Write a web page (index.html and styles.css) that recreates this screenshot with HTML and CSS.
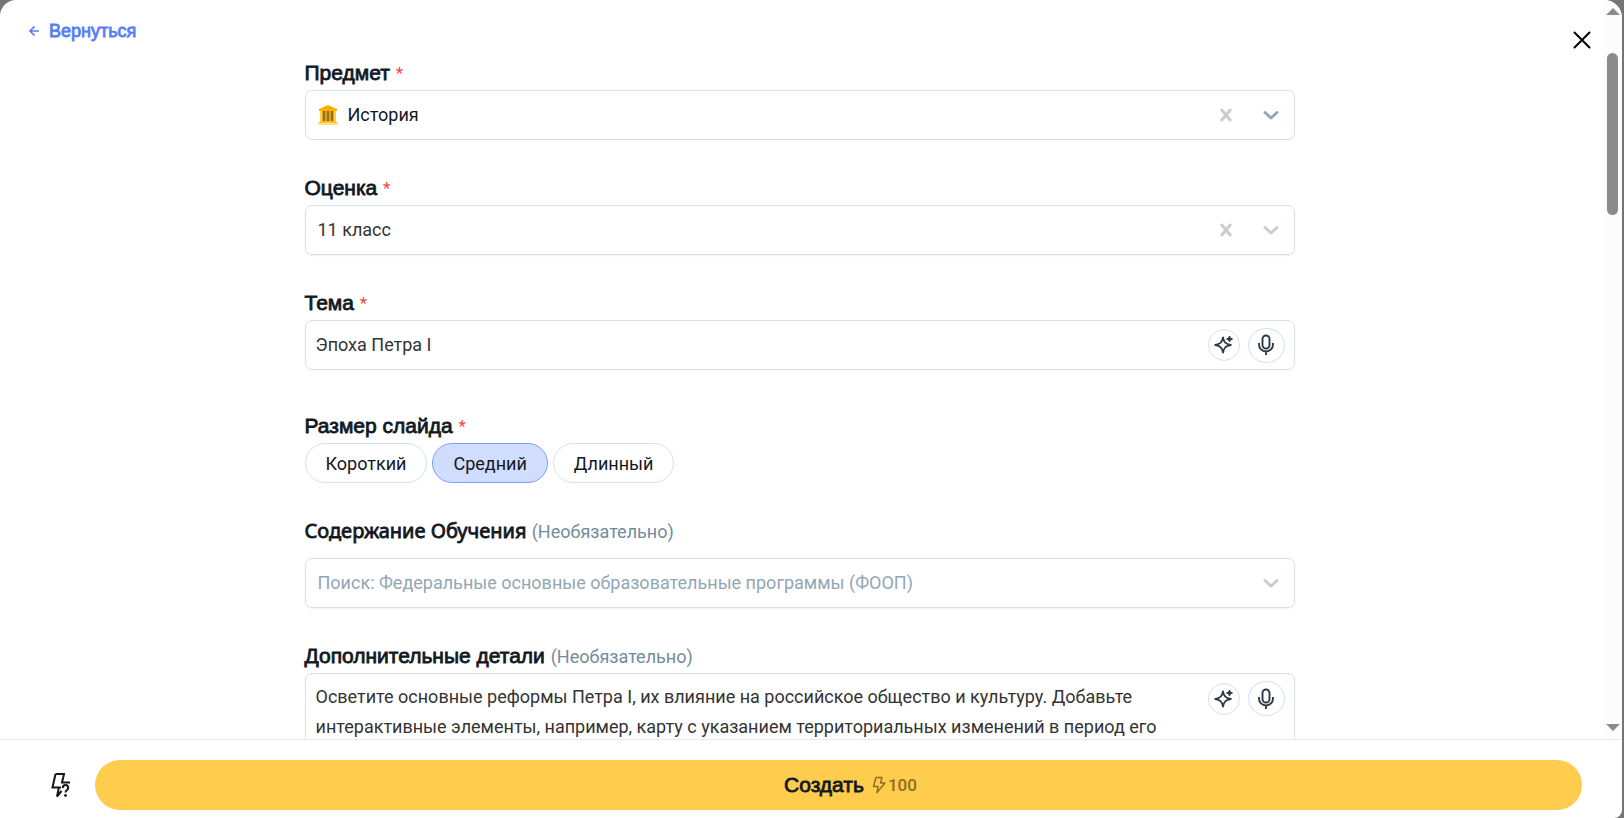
FILE: index.html
```
<!DOCTYPE html>
<html lang="ru">
<head>
  <meta charset="utf-8">
  <title>Создать презентацию</title>
  <link rel="stylesheet" href="styles.css">
</head>
<body>
  <svg class="sprite" aria-hidden="true">
    <symbol id="clear" viewBox="0 0 12 14">
      <path d="M1.800 2l8.400 10M10.200 2l-8.400 10" fill="none" stroke="currentColor" stroke-width="3" stroke-linecap="round"/>
    </symbol>
    <symbol id="chevron" viewBox="0 0 16 10">
      <path d="M2 2.500l6 5.500 6-5.500" fill="none" stroke="currentColor" stroke-width="3" stroke-linecap="round" stroke-linejoin="round"/>
    </symbol>
    <symbol id="sparkle" viewBox="0 0 20 20">
      <path d="M9 2.500c.9 4.800 2.600 6.600 7.800 7.500-5.200.9-6.900 2.700-7.800 7.500-.9-4.800-2.600-6.600-7.800-7.500 5.200-.9 6.900-2.700 7.800-7.500z" fill="none" stroke="currentColor" stroke-width="1.800" stroke-linejoin="round"/>
      <path d="M15.500 1l.9 2.100 2.100.9-2.100.9-.9 2.100-.9-2.100-2.100-.9 2.100-.9z" fill="currentColor" stroke="currentColor" stroke-width="1" stroke-linejoin="round"/>
    </symbol>
    <symbol id="mic" viewBox="0 0 16 22">
      <rect x="4.500" y="1.500" width="7" height="13" rx="3.500" fill="none" stroke="currentColor" stroke-width="1.900"/>
      <path d="M1 9v1.500a7 7 0 0 0 14 0v-1.500M8 17.500v3.500" fill="none" stroke="currentColor" stroke-width="1.900"/>
    </symbol>
  </svg>

  <div class="modal">
    <div class="modal-body">
      <div class="content">
        <header class="header">
          <a class="back" href="#">
            <svg width="10" height="10" viewBox="0 0 10 10" aria-hidden="true"><path d="M10 5H1M5.500.5L1 5l4.500 4.500" fill="none" stroke="currentColor" stroke-width="1.600"/></svg>
            Вернуться
          </a>
          <button class="close" type="button" aria-label="Закрыть">
            <svg width="18" height="18" viewBox="0 0 18 18"><path d="M1.500 1.500l15 15M16.500 1.500l-15 15" stroke="#000" stroke-width="2" stroke-linecap="round"/></svg>
          </button>
        </header>

        <form class="form" id="slides">
          <div class="field">
            <label class="label" for="subject">Предмет <span class="required">*</span></label>
            <div class="control">
              <svg class="museum" width="20" height="20" viewBox="0 0 20 20" aria-hidden="true">
                <path d="M2 6h16v11H2z" fill="#ffd04c"/>
                <path d="M4 6h12v10H4z" fill="#d9a520"/>
                <path d="M5 6h2v10H5zM9 6h2v10H9zM13 6h2v10h-2z" fill="#94721d"/>
                <path d="M10 0l9 4v2H1V4z" fill="#fbb000"/>
                <path d="M2 16h16l2 3H0z" fill="#ffbf22"/>
                <path d="M0 18h20v2H0z" fill="#ffe08a"/>
              </svg>
              <select class="select select-dark" id="subject"><option>История</option></select>
              <button class="clear" type="button" aria-label="Очистить предмет"><svg width="12" height="14"><use href="#clear"/></svg></button>
              <svg class="chevron chevron-dark" width="16" height="10" aria-hidden="true"><use href="#chevron"/></svg>
            </div>
          </div>

          <div class="field">
            <label class="label" for="grade">Оценка <span class="required">*</span></label>
            <div class="control control-shadow">
              <select class="select" id="grade"><option>11 класс</option></select>
              <button class="clear" type="button" aria-label="Очистить класс"><svg width="12" height="14"><use href="#clear"/></svg></button>
              <svg class="chevron" width="16" height="10" aria-hidden="true"><use href="#chevron"/></svg>
            </div>
          </div>

          <div class="field field-topic">
            <label class="label" for="topic">Тема <span class="required">*</span></label>
            <div class="control control-text">
              <input class="input" id="topic" type="text" value="Эпоха Петра I">
              <div class="tools">
                <button class="tool" type="button" aria-label="Улучшить тему"><svg width="20" height="20"><use href="#sparkle"/></svg></button>
                <button class="tool tool-mic" type="button" aria-label="Продиктовать тему"><svg width="16" height="22"><use href="#mic"/></svg></button>
              </div>
            </div>
          </div>

          <fieldset class="field sizes">
            <legend class="label">Размер слайда <span class="required">*</span></legend>
            <div class="pills">
              <label class="pill"><input type="radio" name="size">Короткий</label>
              <label class="pill"><input type="radio" name="size" checked>Средний</label>
              <label class="pill"><input type="radio" name="size">Длинный</label>
            </div>
          </fieldset>

          <div class="field field-search">
            <label class="label label-alt" for="standards">Содержание Обучения <span class="optional">(Необязательно)</span></label>
            <div class="control control-shadow">
              <input class="input" id="standards" type="text" placeholder="Поиск: Федеральные основные образовательные программы (ФООП)">
              <svg class="chevron" width="16" height="10" aria-hidden="true"><use href="#chevron"/></svg>
            </div>
          </div>

          <div class="field">
            <label class="label" for="details">Дополнительные детали <span class="optional">(Необязательно)</span></label>
            <div class="control control-text control-area">
              <textarea class="input" id="details" rows="4">Осветите основные реформы Петра I, их влияние на российское общество и культуру. Добавьте
интерактивные элементы, например, карту с указанием территориальных изменений в период его</textarea>
              <div class="tools">
                <button class="tool" type="button" aria-label="Улучшить детали"><svg width="20" height="20"><use href="#sparkle"/></svg></button>
                <button class="tool tool-mic" type="button" aria-label="Продиктовать детали"><svg width="16" height="22"><use href="#mic"/></svg></button>
              </div>
            </div>
          </div>
        </form>
      </div>

      <div class="scrollbar" aria-hidden="true">
        <span class="arrow arrow-up"></span>
        <span class="track"><span class="thumb"></span></span>
        <span class="arrow arrow-down"></span>
      </div>
    </div>

    <footer class="footer">
      <button class="help" type="button" aria-label="О кредитах">
        <svg width="20" height="26" viewBox="0 0 20 26">
          <path d="M4.500 2H13l-2 8.500h8M10 15.500H1.500L4.500 2M8 15l-2 9.500 4.500-5.500" fill="none" stroke="currentColor" stroke-width="2"/>
          <path d="M11.800 16c0-4 5.400-4 5.400 0 0 2-2.700 2-2.700 4.500" fill="none" stroke="currentColor" stroke-width="2"/>
          <circle cx="14.500" cy="23.500" r="1.400" fill="currentColor"/>
        </svg>
      </button>
      <button class="create" type="submit" form="slides">
        Создать
        <span class="cost">
          <svg width="14" height="18" viewBox="0 0 14 18" aria-hidden="true"><path d="M4 1.500h6L8.500 7H13L5 16.500l1-6H1.500z" fill="none" stroke="currentColor" stroke-width="1.500" stroke-linejoin="round"/></svg>
          100
        </span>
      </button>
    </footer>
  </div>
</body>
</html>
```
FILE: styles.css
```
* {
  box-sizing: border-box;
}

body {
  margin: 0;
  padding-right: 2px;
  background-color: #757575;
  color: #11181f;
  font-family: Roboto, sans-serif;
  font-size: 18px;
}

button {
  padding: 0;
  border: none;
  background: none;
  color: inherit;
  font: inherit;
  cursor: pointer;
}

svg {
  display: block;
  flex: none;
}

.sprite {
  display: none;
}

.modal {
  display: flex;
  flex-direction: column;
  height: 100vh;
  background-color: #fff;
  border-radius: 16px 18px 8px 0;
  overflow: hidden;
}

.modal-body {
  display: flex;
  flex: 1;
  min-height: 0;
}

.content {
  flex: 1;
  min-width: 0;
  padding-right: 4px;
  overflow: hidden;
}

.header {
  display: flex;
  justify-content: space-between;
  align-items: flex-start;
  height: 56px;
  padding: 20px 8px 0 29px;
}

.back {
  display: flex;
  align-items: center;
  gap: 10px;
  color: #587df5;
  font-family: "Liberation Sans", Arial, sans-serif;
  line-height: 22px;
  text-decoration: none;
  -webkit-text-stroke: 0.8px;
}

.close {
  padding-top: 11px;
}

.form {
  max-width: 990px;
  margin: 0 auto;
}

.field {
  margin: 0 0 31px;
}

.field-topic {
  margin-bottom: 39px;
}

.label {
  display: block;
  height: 34px;
  padding: 0;
  font-family: "Liberation Sans", Arial, sans-serif;
  font-size: 21px;
  line-height: 34px;
  -webkit-text-stroke: 0.8px;
}

.label-alt {
  font-family: "Noto Sans", sans-serif;
  font-size: 20px;
}

.required {
  color: #ef4444;
  font-family: Roboto, sans-serif;
  font-size: 17px;
  vertical-align: 1px;
  -webkit-text-stroke: 0;
}

.optional {
  color: #738c9b;
  font-family: Roboto, sans-serif;
  font-size: 18px;
  -webkit-text-stroke: 0;
}

.control {
  display: flex;
  align-items: center;
  height: 50px;
  padding: 0 15px 0 12px;
  border: 1px solid #d5e1ec;
  border-radius: 7px;
}

.control-shadow {
  box-shadow: 0 1px 2px rgba(0, 0, 0, 0.06);
}

.control-text {
  gap: 8px;
  padding: 0 9px 0 10px;
}

.control-area {
  align-items: flex-start;
  height: auto;
  padding-top: 7px;
}

.museum {
  margin-right: 10px;
}

.select,
.input {
  flex: 1;
  min-width: 0;
  height: 30px;
  padding: 0;
  border: none;
  outline: none;
  appearance: none;
  background: none;
  color: #333;
  font: inherit;
  line-height: 30px;
}

.select-dark {
  color: #11181f;
}

.input::placeholder {
  color: #92a7b5;
  opacity: 1;
}

textarea.input {
  height: 122px;
  padding-top: 1px;
  resize: none;
  white-space: pre;
  overflow: hidden;
}

.clear {
  margin-right: 31px;
  color: #ccc;
}

.chevron {
  color: #ccc;
}

.chevron-dark {
  color: #92a7b5;
}

.tools {
  display: flex;
  align-items: center;
  gap: 8px;
}

.tool {
  display: flex;
  align-items: center;
  justify-content: center;
  width: 32px;
  height: 32px;
  border: 1px solid #d5e1ec;
  border-radius: 50%;
  color: #2b3a45;
}

.tool-mic {
  width: 37px;
  height: 35px;
}

.sizes {
  padding: 0;
  border: none;
}

.pills {
  display: flex;
  gap: 5px;
}

.pill {
  height: 40px;
  padding: 0 20px;
  border: 1px solid #d5e1ec;
  border-radius: 20px;
  line-height: 40px;
  cursor: pointer;
}

.pill input {
  position: absolute;
  opacity: 0;
}

.pill:has(input:checked) {
  background-color: #d1ddff;
  border-color: #7f9dfb;
}

.field-search .label {
  margin-bottom: 10px;
}

.scrollbar {
  display: flex;
  flex-direction: column;
  align-items: center;
  width: 19px;
  padding: 8px 0;
  background-color: #fcfcfc;
}

.arrow {
  border: 0 solid transparent;
  border-width: 0 7px;
}

.arrow-up {
  border-bottom: 7px solid #8b8b8b;
}

.arrow-down {
  border-top: 7px solid #8b8b8b;
}

.track {
  flex: 1;
  padding-top: 38px;
}

.thumb {
  display: block;
  width: 11px;
  height: 162px;
  border-radius: 6px;
  background-color: #8b8b8b;
}

.footer {
  display: flex;
  align-items: center;
  gap: 24px;
  padding: 20px 40px 8px 51px;
  border-top: 1px solid #eaeaea;
}

.create {
  display: flex;
  flex: 1;
  align-items: center;
  justify-content: center;
  gap: 8px;
  height: 50px;
  padding-left: 24px;
  border-radius: 25px;
  background-color: #ffcc4d;
  font-family: "Liberation Sans", Arial, sans-serif;
  font-size: 21px;
  -webkit-text-stroke: 0.8px;
}

.cost {
  display: flex;
  align-items: center;
  gap: 2px;
  color: #8b701f;
  font-family: Roboto, sans-serif;
  font-size: 17px;
  font-weight: 500;
  -webkit-text-stroke: 0;
}
```
